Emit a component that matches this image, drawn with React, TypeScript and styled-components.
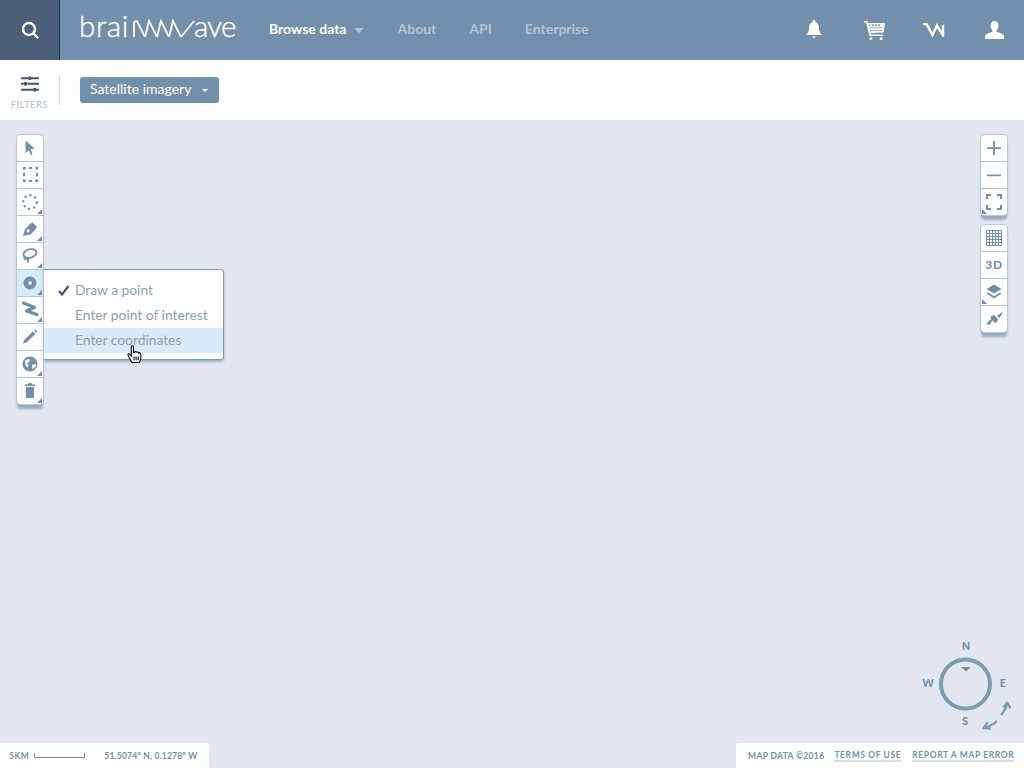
import React from "react";
import styled, { createGlobalStyle } from "styled-components";

const Corner = ({ left }: { left?: boolean }) => <CornerMark $left={left} />;

const tools = [
  { key: "select", corner: false, icon: <path d="M8.500 5.500l9 8-3.800.8 1.800 5.200-1.500.7-2.100-5.200-3.400 3z" fill="#728fab" /> },
  { key: "rect", corner: false, icon: <rect x="7" y="6" width="13" height="13" fill="none" stroke="#728fab" strokeWidth="2" strokeDasharray="3.500 3" strokeDashoffset="1.750" /> },
  { key: "circle", corner: true, icon: <circle cx="13" cy="13" r="6.800" fill="none" stroke="#728fab" strokeWidth="2.200" strokeDasharray="2.200 3" /> },
  { key: "pen", corner: true, icon: <path d="M6 20l2-7 5-5 2.500-1.500L20 11l-1.500 2.500-5 5zM10.500 13.500a1.500 1.500 0 1 0 2 2 1.500 1.500 0 0 0-2-2z" fill="#728fab" fillRule="evenodd" /> },
  { key: "lasso", corner: true, icon: <g fill="none" stroke="#728fab" strokeWidth="1.800"><ellipse cx="13" cy="10.500" rx="6.600" ry="4.200" transform="rotate(-15 13 10.500)" /><path d="M8 13.500c-2 2 1 3.500 2.500 2 1-1 .7 2 .3 4" /></g> },
  { key: "point", corner: true, active: true, icon: <path d="M13 6.500a6.500 6.500 0 1 0 0 13 6.500 6.500 0 0 0 0-13zm0 4.500a2 2 0 1 1 0 4 2 2 0 0 1 0-4z" fill="#728fab" fillRule="evenodd" /> },
  { key: "line", corner: true, icon: <path d="M6.500 6l11 4.500-8 3.500 10.500 3.500" fill="none" stroke="#728fab" strokeWidth="3.200" strokeLinejoin="round" strokeLinecap="round" /> },
  { key: "edit", corner: false, icon: <path d="M6 19.500l1.200-3.500 8.800-8.800 2.500 2.500-8.800 8.800zM17 6.200l1-1 2.500 2.500-1 1z" fill="#728fab" /> },
  { key: "globe", corner: true, icon: <g><circle cx="13" cy="13" r="7.500" fill="#728fab" /><path d="M8 9.500l3-1.500 2 1-1 2-2 1 1.500 2-1 2.500-2-2zM15 14l3-1 1.500 1-2 3-2 1z" fill="#fff" /></g> },
  { key: "trash", corner: true, icon: <path d="M8 6.500h3l.5-1.500h3l.5 1.500h3V8H8zM9 9h8v11H9z" fill="#728fab" /> },
];

const App = () => {
  return (
    <Page>
      <GlobalStyle />
      <Header>
        <SearchButton>
          <svg width="20" height="20" viewBox="0 0 20 20" fill="none" stroke="#fff" strokeWidth="2.400">
            <circle cx="9" cy="9" r="6" />
            <path d="M13.500 13.500l4 4" strokeLinecap="round" />
          </svg>
        </SearchButton>
        <Logo aria-label="brainwave">
          <LogoWord $spacing={0.7}>brai</LogoWord>
          <svg width="63" height="24" viewBox="0 0 63 24" fill="none" stroke="#fff" strokeWidth="1.800">
            <path d="M2 24V9l3-1 8 16 4-16 8 16 4-16 8 16 4-16 8 16 13-16" />
          </svg>
          <LogoWord $spacing={-0.8}>ave</LogoWord>
        </Logo>
        <Nav>
          <NavLink $active>
            Browse data <NavCaret />
          </NavLink>
          <NavLink>About</NavLink>
          <NavLink>API</NavLink>
          <NavLink>Enterprise</NavLink>
        </Nav>
        <HeaderIcons>
          <svg width="16" height="20" viewBox="0 0 16 20" fill="#fff">
            <path d="M8 0a1.300 1.300 0 0 1 1.200 2C12 2.800 13 5 13 8c0 3 1 5 3 7H0c2-2 3-4 3-7 0-3 1-5.200 3.800-6A1.300 1.300 0 0 1 8 0zM6.500 16.500h3a1.500 1.500 0 0 1-3 0z" />
          </svg>
          <svg width="21" height="19" viewBox="0 0 21 19" fill="#fff">
            <path d="M0 0h3l1 2h17l-1.500 9.500L6.500 12l.3 1.500H19V15H5.500L2 1.500H0z" />
            <path d="M5 3.500h1.500v1.500H5zM8 3.500h2v1.500H8zM11 3.500h2v1.500h-2zM14 3.500h2v1.500h-2z" fill="#728fab" />
            <path d="M5.500 6.500h13V7.300h-13zM5.800 9h12.500v.8H5.800z" fill="#728fab" />
            <circle cx="7" cy="17.500" r="1.500" />
            <circle cx="17" cy="17.500" r="1.500" />
          </svg>
          <svg width="22" height="14" viewBox="0 0 22 14" fill="none" stroke="#fff" strokeWidth="2.400">
            <path d="M0 1l3.500 0 6 11L14 2.500 20 12.500V2" />
          </svg>
          <svg width="19" height="18" viewBox="0 0 19 18" fill="#fff">
            <path d="M9.500 0C12 0 13.500 2 13.500 4.500c0 2-1 3.700-2 4.700v1.600c2.500 1 7.500 2 7.500 4.200V18H0v-3c0-2.200 5-3.200 7.500-4.200V9.200c-1-1-2-2.700-2-4.700C5.500 2 7 0 9.500 0z" />
          </svg>
        </HeaderIcons>
      </Header>

      <SubBar>
        <FilterToggle>
          <svg width="18" height="16" viewBox="0 0 18 16" fill="#3f566e">
            <path d="M0 1.200h7v2H0zM11 1.200h7v2h-7zM0 6.800h2.500v2H0zM6.500 6.800H18v2H6.500zM0 12.800h12v2H0zM15.500 12.800H18v2h-2.500z" />
            <circle cx="9" cy="2.200" r="2" />
            <circle cx="4.500" cy="7.800" r="2" />
            <circle cx="13.800" cy="13.800" r="2" />
          </svg>
          <FilterLabel>FILTERS</FilterLabel>
        </FilterToggle>
        <SubDivider />
        <SelectButton>
          Satellite imagery
          <SelectCaret />
        </SelectButton>
      </SubBar>

      <MapArea>
        <MapTop>
          <ToolPanel>
            {tools.map((t) => (
              <ToolButton key={t.key} $active={t.active}>
                <svg width="26" height="26" viewBox="0 0 26 26">{t.icon}</svg>
                {t.corner && <Corner />}
                {t.key === "point" && (
                  <PointMenu>
                    <MenuItem>
                      <Check width="12" height="11" viewBox="0 0 12 11">
                        <path d="M1 6l3 3.500L10.500 1" fill="none" stroke="#3f566e" strokeWidth="2.200" />
                      </Check>
                      Draw a point
                    </MenuItem>
                    <MenuItem>Enter point of interest</MenuItem>
                    <MenuItem $hover>Enter coordinates</MenuItem>
                    <HandCursor viewBox="0 0 14 18" width="15" height="19">
                      <path d="M4 1.500c0-1 2-1 2 0V7l1 0c0-1 2-1 2 .2.300-.8 2-.7 2 .5.500-.5 2-.3 2 .8V12c0 2-.8 3-1.500 4.500h-7L2 12 .8 9.500c-.3-1 1-1.800 1.800-.8L4 10.500z" fill="#fff" stroke="#000" strokeWidth="1" />
                      <path d="M6.500 11v3.500M8.500 11v3.500M10.500 11v3.500" stroke="#000" strokeWidth="1" />
                    </HandCursor>
                  </PointMenu>
                )}
              </ToolButton>
            ))}
          </ToolPanel>

          <RightRail>
            <ToolPanel>
              <ToolButton>
                <svg width="26" height="26" viewBox="0 0 26 26"><path d="M12.200 6h1.800v6.200h6v1.800h-6v6h-1.800v-6h-6v-1.800h6z" fill="#728fab" /></svg>
              </ToolButton>
              <ToolButton>
                <svg width="26" height="26" viewBox="0 0 26 26"><path d="M6 12.500h14v1.700H6z" fill="#728fab" /></svg>
              </ToolButton>
              <ToolButton>
                <svg width="26" height="26" viewBox="0 0 26 26"><path d="M6 10V6h4M16 6h4v4M20 16v4h-4M10 20H6v-4" fill="none" stroke="#728fab" strokeWidth="2" /></svg>
                <Corner left />
              </ToolButton>
            </ToolPanel>
            <ToolPanel>
              <ToolButton>
                <svg width="26" height="26" viewBox="0 0 26 26">
                  <path d="M5.500 5.500h15v15h-15zM5.500 8.500h15M5.500 11.500h15M5.500 14.500h15M5.500 17.500h15M8.500 5.500v15M11.500 5.500v15M14.500 5.500v15M17.500 5.500v15" fill="none" stroke="#728fab" strokeWidth="1" />
                </svg>
              </ToolButton>
              <ToolButton>
                <ThreeD>3D</ThreeD>
              </ToolButton>
              <ToolButton>
                <svg width="26" height="26" viewBox="0 0 26 26">
                  <path d="M13 5.500l7.500 4.500-7.500 4.500L5.500 10z" fill="#728fab" />
                  <path d="M7 13.500L5.500 14.500l7.500 5 7.500-5-1.500-1-6 3.800z" fill="#728fab" />
                </svg>
                <Corner left />
              </ToolButton>
              <ToolButton>
                <svg width="26" height="26" viewBox="0 0 26 26" fill="#728fab">
                  <path d="M10 10l3-1 4 4-1 3-2 1-4-4z" />
                  <path d="M5 18l5-5 1.500 1.500-3 4.500zM16 10l5-4 .5 1-3 5z" />
                </svg>
              </ToolButton>
            </ToolPanel>
          </RightRail>
        </MapTop>

        <Compass>
          <svg width="100" height="100" viewBox="0 0 100 100">
            <circle cx="43.500" cy="44" r="24.500" fill="none" stroke="#7f9bb0" strokeWidth="4" />
            <path d="M39 27h10l-5 4.500z" fill="#728fab" />
            <g fill="none" stroke="#7f9bb0" strokeWidth="2.400">
              <path d="M85 64c-1 4-3 8-6 11M75 81c-3 3-7 5-12 7" />
              <path d="M81.500 67.500l3.500-4.500 3.500 5M65.500 82L62 88l7 .5" />
            </g>
          </svg>
          <CompassMark $x={44} $y={5}>N</CompassMark>
          <CompassMark $x={6} $y={42}>W</CompassMark>
          <CompassMark $x={81} $y={42}>E</CompassMark>
          <CompassMark $x={43} $y={80}>S</CompassMark>
        </Compass>

        <Footer>
          <FooterBox $side="left">
            <span>5KM</span>
            <Scale />
            <Coords>51.5074° N, 0.1278° W</Coords>
          </FooterBox>
          <FooterBox $side="right">
            <MapData>MAP DATA ©2016</MapData>
            <FooterLink>TERMS OF USE</FooterLink>
            <FooterLink>REPORT A MAP ERROR</FooterLink>
          </FooterBox>
        </Footer>
      </MapArea>
    </Page>
  );
};

export default App;

const GlobalStyle = createGlobalStyle`
  html, body {
    margin: 0;
    padding: 0;
    height: 768px;
    overflow: hidden;
  }
  body {
    font-family: Lato, "Open Sans", sans-serif;
  }
`;

const Page = styled.div`
  width: 1024px;
  height: 768px;
  display: flex;
  flex-direction: column;
`;

const Header = styled.header`
  height: 60px;
  flex: none;
  display: flex;
  align-items: center;
  background: #728fab;
`;

const SearchButton = styled.div`
  box-sizing: border-box;
  width: 60px;
  height: 60px;
  display: flex;
  align-items: center;
  justify-content: center;
  background: #4c5f78;
  border-right: 1px solid #22303f;
`;

const Logo = styled.div`
  display: flex;
  align-items: baseline;
  margin-left: 19px;
  padding-bottom: 9px;
  width: 190px;
  font-size: 29.500px;
  font-weight: 300;
  -webkit-text-stroke: 0.4px #fff;
  color: #fff;
  line-height: 30px;

  svg {
    align-self: flex-end;
    margin: 0 -1px 4px 3px;
    flex: none;
  }
`;

const LogoWord = styled.span<{ $spacing: number }>`
  letter-spacing: ${(p) => p.$spacing}px;
`;

const Nav = styled.nav`
  display: flex;
  align-items: center;
  gap: 33px;
  padding-bottom: 3px;
`;

const NavLink = styled.span<{ $active?: boolean }>`
  display: flex;
  align-items: center;
  gap: 8px;
  font-size: 14px;
  font-weight: 700;
  color: ${(p) => (p.$active ? "#fff" : "#b3c3d3")};
`;

const NavCaret = styled.i`
  width: 0;
  height: 0;
  margin-top: 3px;
  border-left: 5px solid transparent;
  border-right: 5px solid transparent;
  border-top: 5px solid #b3c3d3;
`;

const HeaderIcons = styled.div`
  margin-left: auto;
  margin-right: 20px;
  display: flex;
  align-items: center;
  gap: 39px;

  svg:nth-child(1) {
    margin-right: 3px;
  }
  svg:nth-child(2) {
    margin-right: -1px;
  }
  svg:nth-child(3) {
    margin-right: 1px;
  }
`;

const SubBar = styled.div`
  height: 60px;
  flex: none;
  display: flex;
  align-items: center;
  background: #fff;
`;

const FilterToggle = styled.div`
  width: 59px;
  display: flex;
  flex-direction: column;
  align-items: center;
  gap: 7px;
  padding-top: 5px;
`;

const FilterLabel = styled.span`
  font-size: 9px;
  letter-spacing: 0.7px;
  color: #a9bdd2;
`;

const SubDivider = styled.div`
  width: 1px;
  height: 29px;
  background: #cfd8e2;
`;

const SelectButton = styled.div`
  box-sizing: border-box;
  margin-left: 20px;
  width: 139px;
  height: 26px;
  padding: 0 0 4px 10px;
  display: flex;
  align-items: center;
  background: #728fab;
  border-radius: 3px;
  color: #fff;
  font-size: 14px;
`;

const SelectCaret = styled.i`
  margin: 4px 0 0 11px;
  width: 0;
  height: 0;
  border-left: 3px solid transparent;
  border-right: 3px solid transparent;
  border-top: 3px solid #fff;
`;

const MapArea = styled.main`
  flex: 1;
  position: relative;
  display: flex;
  flex-direction: column;
  background: #e3e8f0;
`;

const MapTop = styled.div`
  display: flex;
  justify-content: space-between;
  align-items: flex-start;
  padding: 15px 17px;
`;

const RightRail = styled.div`
  display: flex;
  flex-direction: column;
  gap: 10px;
`;

const ToolPanel = styled.div`
  width: 26px;
  background: #fff;
  border-radius: 4px;
  box-shadow: 0 0 0 1px #b9c8d6, 0 5px 3px #96aabd;
  display: flex;
  flex-direction: column;
`;

const ToolButton = styled.div<{ $active?: boolean }>`
  position: relative;
  height: 26px;
  background: ${(p) => (p.$active ? "#d7ebfa" : "transparent")};

  & + & {
    border-top: 1px solid #b9c8d6;
  }

  svg {
    display: block;
  }
`;

const CornerMark = styled.i<{ $left?: boolean }>`
  position: absolute;
  bottom: 1px;
  ${(p) => (p.$left ? "left: 1px;" : "right: 1px;")}
  width: 0;
  height: 0;
  border-bottom: 5px solid #728fab;
  ${(p) =>
    p.$left
      ? "border-right: 5px solid transparent;"
      : "border-left: 5px solid transparent;"}
`;

const ThreeD = styled.span`
  display: block;
  text-align: center;
  line-height: 26px;
  font-size: 12px;
  font-weight: 900;
  letter-spacing: 0.8px;
  color: #728fab;
`;

const PointMenu = styled.div`
  position: absolute;
  z-index: 2;
  top: -1px;
  left: 27px;
  box-sizing: border-box;
  width: 180px;
  height: 91px;
  padding-top: 8px;
  background: #fff;
  border: 1px solid #7f9bb0;
  border-left: none;
  border-radius: 0 3px 3px 0;
  box-shadow: 0 2px 3px #9db0c2;
`;

const MenuItem = styled.div<{ $hover?: boolean }>`
  position: relative;
  height: 25px;
  padding-left: 31px;
  line-height: 23px;
  font-size: 13.800px;
  color: #8a9fb3;
  background: ${(p) => (p.$hover ? "#d7ebfa" : "transparent")};
`;

const Check = styled.svg`
  position: absolute;
  left: 14px;
  top: 7px;
`;

const HandCursor = styled.svg`
  position: absolute;
  left: 83px;
  top: 75px;
`;

const Compass = styled.div`
  position: absolute;
  right: 2px;
  bottom: 28px;
  width: 100px;
  height: 100px;

  svg {
    display: block;
  }
`;

const CompassMark = styled.span<{ $x: number; $y: number }>`
  position: absolute;
  left: ${(p) => p.$x}px;
  top: ${(p) => p.$y}px;
  transform: translate(-50%, -50%);
  font-size: 11px;
  font-weight: 900;
  color: #728fab;
`;

const Footer = styled.footer`
  margin-top: auto;
  display: flex;
  justify-content: space-between;
`;

const FooterBox = styled.div<{ $side: "left" | "right" }>`
  box-sizing: border-box;
  height: 25px;
  display: flex;
  align-items: center;
  background: #fff;
  font-size: 8.500px;
  font-weight: 700;
  letter-spacing: 0.5px;
  white-space: nowrap;
  color: #728fab;
  ${(p) =>
    p.$side === "left"
      ? "width: 209px; padding-left: 9px; border-radius: 0 3px 0 0;"
      : "width: 288px; padding-left: 12px; gap: 11px; border-radius: 3px 0 0 0;"}
`;

const Scale = styled.i`
  box-sizing: border-box;
  width: 51px;
  height: 5px;
  margin: 0 0 0 5px;
  border: 1px solid #728fab;
  border-top: none;
`;

const Coords = styled.span`
  margin-left: 19px;
  letter-spacing: 0.2px;
`;

const MapData = styled.span`
  letter-spacing: 0.35px;
  margin-right: -1px;
`;

const FooterLink = styled.span`
  margin-top: 2px;
  border-bottom: 2px solid #d5deea;
  line-height: 9px;
  letter-spacing: 0.6px;
`;
